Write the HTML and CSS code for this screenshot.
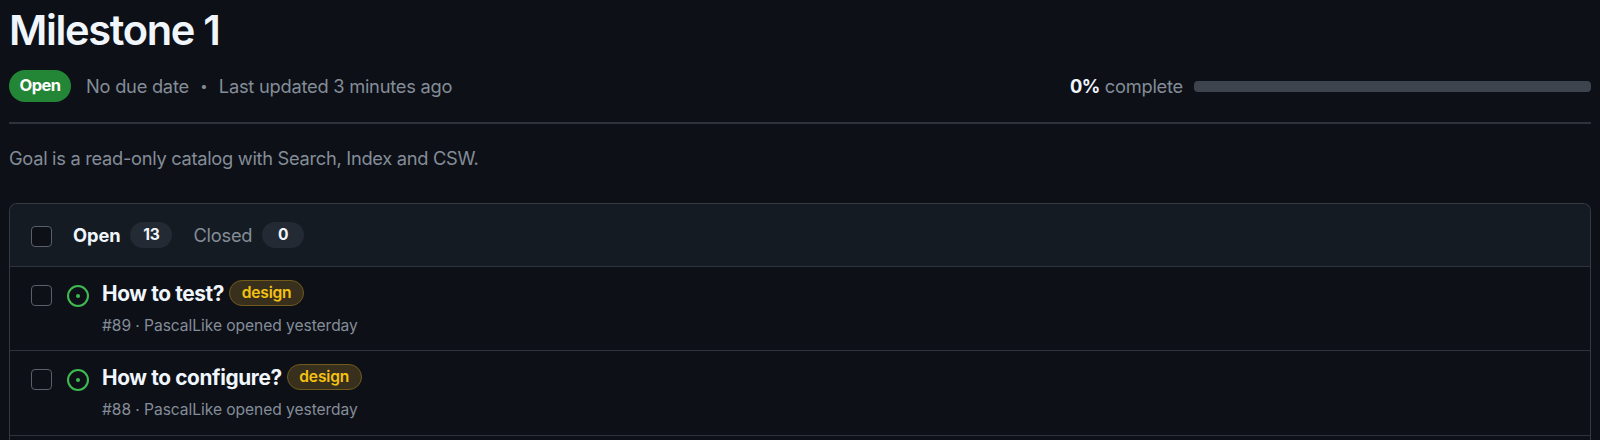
FILE: index.html
```html
<!DOCTYPE html>
<html lang="en">
<head>
    <meta charset="UTF-8">
    <meta name="viewport" content="width=device-width, initial-scale=1.0">
    <title>Milestone 1</title>
    <link rel="stylesheet" href="styles.css">
</head>
<body>

<header class="milestone-header">
    <h1 class="milestone-title">Milestone 1</h1>
    <div class="milestone-meta">
        <span class="state">Open</span>
        <span class="due">No due date</span>
        <span class="dot">•</span>
        <span class="updated">Last updated 3 minutes ago</span>
        <div class="progress">
            <span class="percent"><strong>0%</strong> complete</span>
            <span class="progress-bar"></span>
        </div>
    </div>
</header>

<p class="description">Goal is a read-only catalog with Search, Index and CSW.</p>

<main class="box">
    <div class="box-header">
        <span class="checkbox"></span>
        <a class="tab selected">Open</a>
        <span class="counter">13</span>
        <a class="tab">Closed</a>
        <span class="counter">0</span>
    </div>

    <div class="issue">
        <span class="checkbox"></span>
        <svg class="issue-icon" viewBox="0 0 16 16">
            <path d="M8 9.5a1.5 1.5 0 1 0 0-3 1.5 1.5 0 0 0 0 3Z"/>
            <path d="M8 0a8 8 0 1 1 0 16A8 8 0 0 1 8 0ZM1.5 8a6.5 6.5 0 1 0 13 0 6.5 6.5 0 0 0-13 0Z"/>
        </svg>
        <div class="issue-body">
            <div class="issue-line">
                <a class="issue-title">How to test?</a>
                <span class="label">design</span>
            </div>
            <div class="issue-info">#89 · PascalLike opened yesterday</div>
        </div>
    </div>

    <div class="issue">
        <span class="checkbox"></span>
        <svg class="issue-icon" viewBox="0 0 16 16">
            <path d="M8 9.5a1.5 1.5 0 1 0 0-3 1.5 1.5 0 0 0 0 3Z"/>
            <path d="M8 0a8 8 0 1 1 0 16A8 8 0 0 1 8 0ZM1.5 8a6.5 6.5 0 1 0 13 0 6.5 6.5 0 0 0-13 0Z"/>
        </svg>
        <div class="issue-body">
            <div class="issue-line">
                <a class="issue-title">How to configure?</a>
                <span class="label">design</span>
            </div>
            <div class="issue-info">#88 · PascalLike opened yesterday</div>
        </div>
    </div>
</main>

</body>
</html>
```

FILE: styles.css
```css
* {
    box-sizing: border-box;
}
body {
    font-family: Inter, "Liberation Sans", sans-serif;
    font-size: 18.3px;
    letter-spacing: -0.25px;
    background-color: #0d1017;
    color: #848d97;
    margin: 0;
    padding: 0 9px;
    height: 440px;
}
.milestone-header {
    height: 124px;
    border-bottom: 2px solid #2d333b;
}
.milestone-title {
    margin: 0;
    padding-top: 4px;
    font-size: 41.6px;
    line-height: 52px;
    font-weight: 600;
    letter-spacing: -1.35px;
    color: #f0f6fc;
}
.milestone-meta {
    display: flex;
    align-items: center;
    height: 32px;
    margin-top: 14px;
    white-space: nowrap;
}
.state {
    width: 62px;
    height: 32px;
    line-height: 31px;
    margin-right: 15px;
    border-radius: 16px;
    background-color: #238636;
    color: #fff;
    font-size: 16.5px;
    font-weight: 700;
    letter-spacing: -0.6px;
    text-align: center;
}
.dot {
    width: 30px;
    text-align: center;
    font-size: 13px;
}
.progress {
    display: flex;
    align-items: center;
    margin-left: auto;
}
.progress strong {
    color: #f0f6fc;
    font-weight: 700;
    letter-spacing: -0.5px;
}
.progress-bar {
    width: 397px;
    height: 11px;
    margin-left: 11px;
    border-radius: 4px;
    background-color: #3d444d;
}
.description {
    margin: 0;
    padding-top: 20px;
    height: 79px;
    line-height: 29px;
    letter-spacing: -0.3px;
}
.box {
    height: 237px;
    border: 1px solid #333a42;
    border-bottom: none;
    border-radius: 8px 8px 0 0;
    overflow: hidden;
}
.box-header {
    display: flex;
    align-items: center;
    height: 63px;
    padding-left: 21px;
    background-color: #151b23;
    border-bottom: 1px solid #2d333b;
}
.checkbox {
    flex: none;
    width: 21px;
    height: 21px;
    border: 1px solid #596069;
    border-radius: 4px;
    background-color: #0d1017;
}
.box-header .checkbox {
    margin-top: 2px;
}
.tab {
    margin-left: 21px;
}
.tab.selected {
    color: #f0f6fc;
    font-weight: 700;
    letter-spacing: -0.1px;
}
.counter {
    width: 42px;
    height: 26px;
    line-height: 26px;
    margin-left: 10px;
    border-radius: 13px;
    background-color: #242a33;
    color: #f0f6fc;
    font-size: 15.6px;
    font-weight: 700;
    text-align: center;
}
.issue {
    display: flex;
    height: 84px;
    padding: 12px 0 0 21px;
    border-bottom: 1px solid #2d333b;
}
.issue:last-child {
    height: 85px;
}
.issue .checkbox {
    margin-top: 6px;
}
.issue-icon {
    flex: none;
    width: 22px;
    height: 22px;
    margin: 6px 13px 0 15px;
    fill: #3fb950;
}
.issue-line {
    display: flex;
    align-items: center;
    height: 28px;
}
.issue-title {
    color: #f0f6fc;
    font-size: 20.8px;
    font-weight: 700;
    letter-spacing: -0.36px;
}
.label {
    width: 75px;
    height: 26px;
    line-height: 24px;
    margin-left: 5px;
    border: 1px solid #6f5a1b;
    border-radius: 13px;
    background-color: #38301d;
    color: #f5c211;
    font-size: 15.6px;
    font-weight: 600;
    letter-spacing: -0.2px;
    text-align: center;
}
.issue-info {
    margin-top: 8px;
    font-size: 15.6px;
    line-height: 21px;
    letter-spacing: -0.06px;
}
```
